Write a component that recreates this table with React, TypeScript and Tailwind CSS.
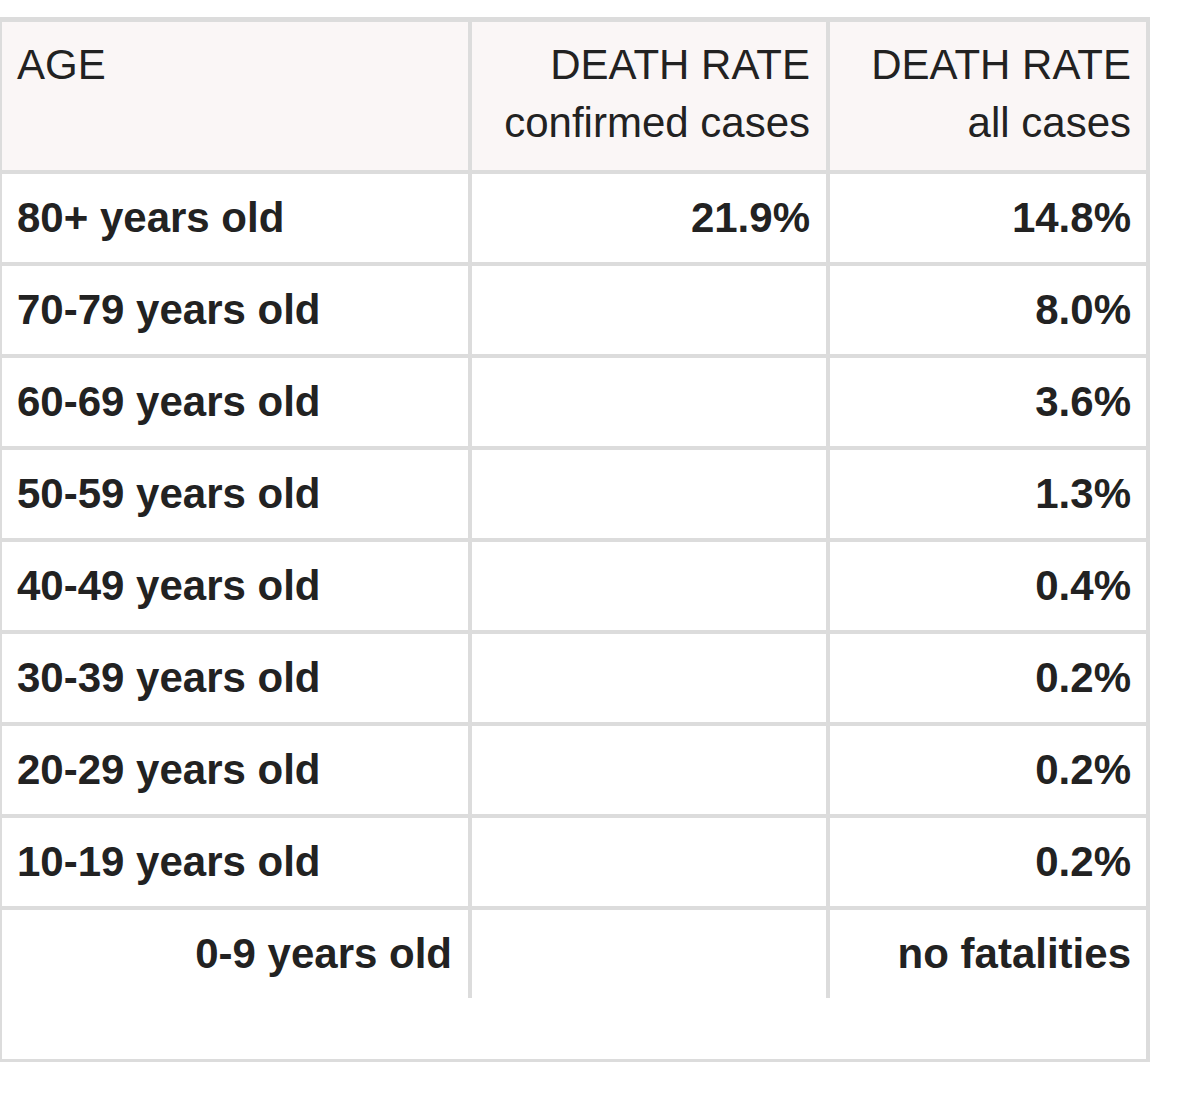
const rows: { age: string; confirmed: string; all: string }[] = [
  { age: "80+ years old", confirmed: "21.9%", all: "14.8%" },
  { age: "70-79 years old", confirmed: "", all: "8.0%" },
  { age: "60-69 years old", confirmed: "", all: "3.6%" },
  { age: "50-59 years old", confirmed: "", all: "1.3%" },
  { age: "40-49 years old", confirmed: "", all: "0.4%" },
  { age: "30-39 years old", confirmed: "", all: "0.2%" },
  { age: "20-29 years old", confirmed: "", all: "0.2%" },
  { age: "10-19 years old", confirmed: "", all: "0.2%" },
];

export default function App() {
  return (
    <div className="bg-white w-[1195px] h-[1098px] pt-[17px] font-['Liberation_Sans',Arial,sans-serif] text-[#222] text-[42px] leading-[58px]">
      <div className="w-[1150px] h-[1045px] border-[#dcdcdc] border-l-2 border-t-[5px] border-r-4 border-b-[3px]">
        <div className="grid grid-cols-[466px_358px_320px]">
          {/* header */}
          <div className="h-[148px] bg-[#faf6f6] pl-[15px] pt-[14px]">AGE</div>
          <div className="h-[148px] bg-[#faf6f6] border-l-4 border-[#dcdcdc] pr-4 pt-[14px] text-right">
            <div>DEATH RATE</div>
            <div>confirmed cases</div>
          </div>
          <div className="h-[148px] bg-[#faf6f6] border-l-4 border-[#dcdcdc] pr-[15px] pt-[14px] text-right">
            <div>DEATH RATE</div>
            <div>all cases</div>
          </div>

          {rows.map((row) => (
            <div key={row.age} className="contents font-bold">
              <div className="h-[92px] border-t-4 border-[#dcdcdc] pl-[15px] flex items-center">
                {row.age}
              </div>
              <div className="h-[92px] border-t-4 border-l-4 border-[#dcdcdc] pr-4 flex items-center justify-end">
                {row.confirmed}
              </div>
              <div className="h-[92px] border-t-4 border-l-4 border-[#dcdcdc] pr-[15px] flex items-center justify-end">
                {row.all}
              </div>
            </div>
          ))}

          {/* last row, aligned right */}
          <div className="h-[92px] border-t-4 border-[#dcdcdc] pr-4 flex items-center justify-end font-bold">
            0-9 years old
          </div>
          <div className="h-[92px] border-t-4 border-l-4 border-[#dcdcdc]" />
          <div className="h-[92px] border-t-4 border-l-4 border-[#dcdcdc] pr-[15px] flex items-center justify-end font-bold">
            no fatalities
          </div>
        </div>
      </div>
    </div>
  );
}
